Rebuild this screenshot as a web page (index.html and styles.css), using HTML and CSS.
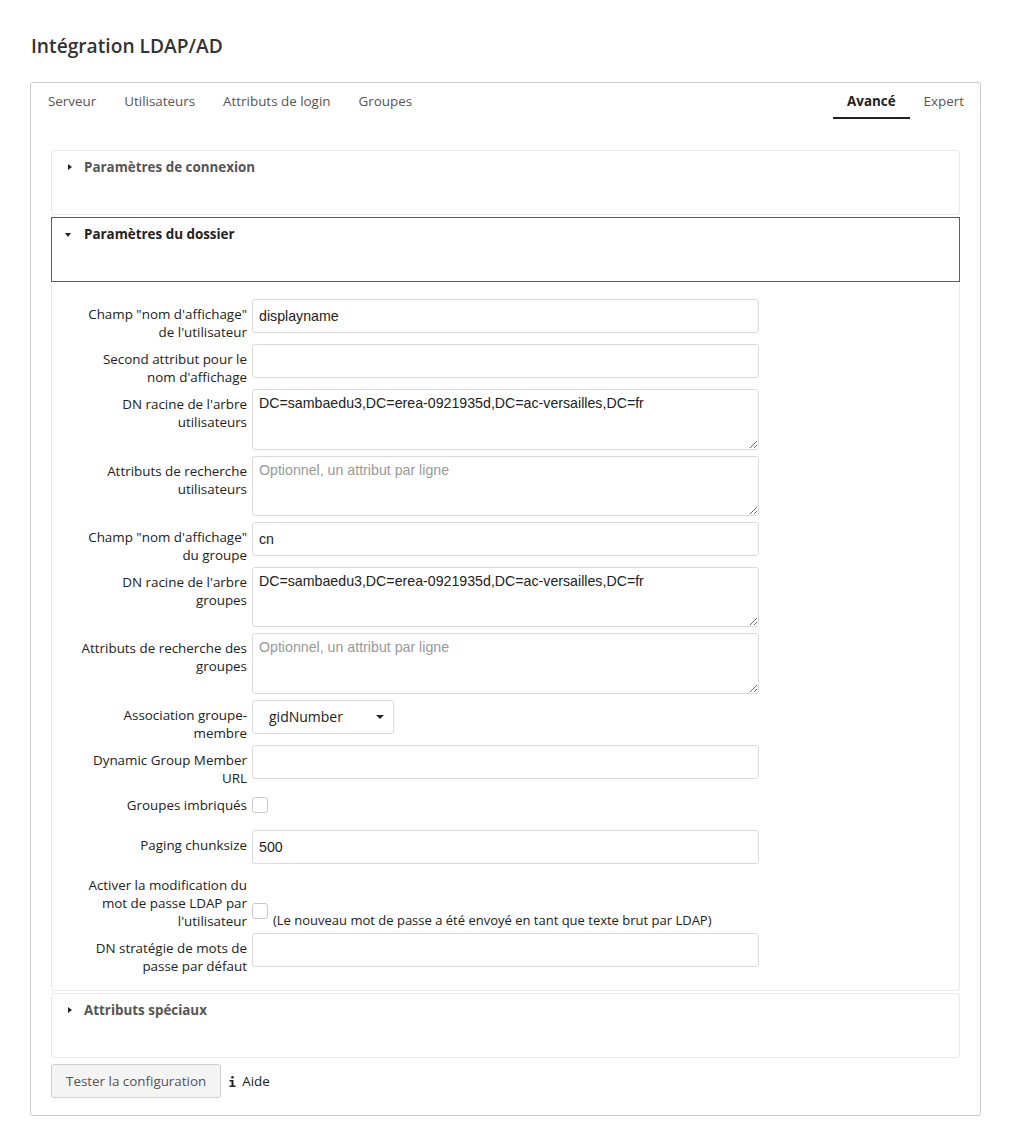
FILE: index.html
```html
<!DOCTYPE html>
<html lang="fr">
<head>
    <meta charset="UTF-8">
    <meta name="viewport" content="width=device-width, initial-scale=1.0">
    <title>Intégration LDAP/AD</title>
    <link rel="stylesheet" href="styles.css">
</head>
<body>
    <h2 class="page-title">Intégration LDAP/AD</h2>

<div class="ldap-box">
    <!-- Tabs -->
    <ul class="tabs">
        <li>Serveur</li>
        <li>Utilisateurs</li>
        <li>Attributs de login</li>
        <li>Groupes</li>
        <li class="spacer"></li>
        <li class="active">Avancé</li>
        <li>Expert</li>
    </ul>

    <div class="section">
        <div class="section-head">
            <span class="arrow-right"></span>Paramètres de connexion
        </div>
    </div>

    <div class="section open">
        <div class="section-head">
            <span class="arrow-down"></span>Paramètres du dossier
        </div>
        <div class="section-body">
            <div class="row">
                <label>Champ "nom d'affichage"<br>de l'utilisateur</label>
                <input type="text" class="field" value="displayname">
            </div>
            <div class="row">
                <label>Second attribut pour le<br>nom d'affichage</label>
                <input type="text" class="field">
            </div>
            <div class="row">
                <label>DN racine de l'arbre<br>utilisateurs</label>
                <textarea class="field area">DC=sambaedu3,DC=erea-0921935d,DC=ac-versailles,DC=fr</textarea>
            </div>
            <div class="row">
                <label>Attributs de recherche<br>utilisateurs</label>
                <textarea class="field area" placeholder="Optionnel, un attribut par ligne"></textarea>
            </div>
            <div class="row">
                <label>Champ "nom d'affichage"<br>du groupe</label>
                <input type="text" class="field" value="cn">
            </div>
            <div class="row">
                <label>DN racine de l'arbre<br>groupes</label>
                <textarea class="field area">DC=sambaedu3,DC=erea-0921935d,DC=ac-versailles,DC=fr</textarea>
            </div>
            <div class="row">
                <label>Attributs de recherche des<br>groupes</label>
                <textarea class="field area" placeholder="Optionnel, un attribut par ligne"></textarea>
            </div>
            <div class="row">
                <label>Association groupe-<br>membre</label>
                <span class="select-wrap">
                    <select class="select">
                        <option>gidNumber</option>
                        <option>uniqueMember</option>
                        <option>memberUid</option>
                        <option>member (AD)</option>
                    </select>
                    <svg class="caret" width="8" height="4" viewBox="0 0 8 4"><path d="M0 0h8L4 4z" fill="#222"/></svg>
                </span>
            </div>
            <div class="row">
                <label>Dynamic Group Member<br>URL</label>
                <input type="text" class="field">
            </div>
            <div class="row row-check">
                <label>Groupes imbriqués</label>
                <input type="checkbox" class="check">
            </div>
            <div class="row">
                <label>Paging chunksize</label>
                <input type="text" class="field" value="500">
            </div>
            <div class="row">
                <label>Activer la modification du<br>mot de passe LDAP par<br>l'utilisateur</label>
                <div class="check-note">
                    <input type="checkbox" class="check">
                    <span>(Le nouveau mot de passe a été envoyé en tant que texte brut par LDAP)</span>
                </div>
            </div>
            <div class="row">
                <label>DN stratégie de mots de<br>passe par défaut</label>
                <input type="text" class="field">
            </div>
        </div>
    </div>

    <div class="section">
        <div class="section-head">
            <span class="arrow-right"></span>Attributs spéciaux
        </div>
    </div>

    <div class="actions">
        <button class="btn">Tester la configuration</button>
        <a class="help" href="#">
            <svg width="7" height="11" viewBox="0 0 7 11"><circle cx="3.5" cy="1.3" r="1.3" fill="#222"/><path d="M0.5 4h4v5.5h2V11h-6V9.5h2V5.5h-2z" fill="#222"/></svg>
            Aide
        </a>
    </div>
</div>
</body>
</html>
```

FILE: styles.css
```css
/* Basic page styling */
body {
margin: 0;font-family: "Open Sans", "Noto Sans", sans-serif;font-size: 13.4px;color: #222;background: #fff;
}
.page-title {
margin: 0;padding: 32px 0 0 31px;font-size: 19.2px;line-height: 28px;font-weight: 600;color: #333;
}
/* Outer box */
.ldap-box {
margin: 22px 0 0 30px;width: 951px;border: 1px solid #ccc;border-radius: 3px;
padding: 0 20px 17px 20px;box-sizing: border-box;
}
/* Tabs */
.tabs {
list-style: none;display: flex;margin: 0 -18px 31px -17px;padding: 0;
}
.tabs li {
padding: 1px 14px 0 14px;line-height: 35px;height: 36px;color: #555;box-sizing: border-box;
}
.tabs .spacer {
flex: 1;padding: 0;
}
.tabs .active {
font-weight: bold;color: #222;border-bottom: 2px solid #222;
}
/* Collapsible sections */
.section {
border: 1px solid #e8e8e8;border-radius: 3px;margin-bottom: 2px;
}
.section-head {
height: 63px;padding: 7px 0 0 32px;box-sizing: border-box;line-height: 18px;
font-weight: bold;color: #555;position: relative;
}
.open .section-head {
margin: -1px;height: 65px;padding: 7px 0 0 32px;border: 1px solid #0f74b8;color: #222;
}
.arrow-right {
position: absolute;left: 16px;top: 13px;width: 0;height: 0;
border-top: 3px solid transparent;border-bottom: 3px solid transparent;border-left: 4px solid #222;
}
.arrow-down {
position: absolute;left: 13px;top: 15px;width: 0;height: 0;
border-left: 3.5px solid transparent;border-right: 3.5px solid transparent;border-top: 4px solid #222;
}
/* Form rows */
.section-body {
padding: 15px 0 15px 0;
}
.row {
display: flex;align-items: flex-start;
}
.row label {
width: 200px;flex: none;text-align: right;padding: 9px 5px 0 0;line-height: 18.1px;color: #222;box-sizing: border-box;
}
.field {
margin: 3px 0;width: 507px;height: 34px;padding: 0 6px;box-sizing: border-box;
border: 1px solid #dbdbdb;border-radius: 3px;background: #fff;
font-family: "Liberation Sans", Arial, sans-serif;font-size: 14.2px;color: #222;outline: none;
}
.field::placeholder {
color: #999;
}
.area {
height: 60.25px;padding: 5px 6px;line-height: 17px;resize: vertical;
}
.select-wrap {
position: relative;display: inline-block;margin: 3px 0;
}
.select {
appearance: none;-webkit-appearance: none;width: 142px;height: 34px;padding: 0 16px;
border: 1px solid #dbdbdb;border-radius: 3px;background: #fff;
font-family: "Open Sans", "Noto Sans", sans-serif;font-size: 14px;color: #222;outline: none;
}
.caret {
position: absolute;right: 10px;top: 15px;
}
.check {
appearance: none;-webkit-appearance: none;width: 16px;height: 16px;margin: 10px 0 14px 0;
border: 1px solid #c8c8c8;border-radius: 3px;background: #fff;
}
.check-note {
align-self: flex-end;display: flex;align-items: flex-end;margin-bottom: 1px;
}
.check-note .check {
margin: 0 5px 10px 0;
}
.check-note span {
line-height: 18px;font-size: 13px;
}
/* Footer actions */
.actions {
display: flex;align-items: center;margin-top: 6px;
}
.btn {
height: 34px;padding: 0 14px;border: 1px solid #d0d0d0;border-radius: 3px;background: #f4f4f4;
font-family: "Open Sans", "Noto Sans", sans-serif;font-size: 13.4px;color: #555;
}
.help {
margin-left: 8px;color: #222;text-decoration: none;display: flex;align-items: center;gap: 6px;
}
```
